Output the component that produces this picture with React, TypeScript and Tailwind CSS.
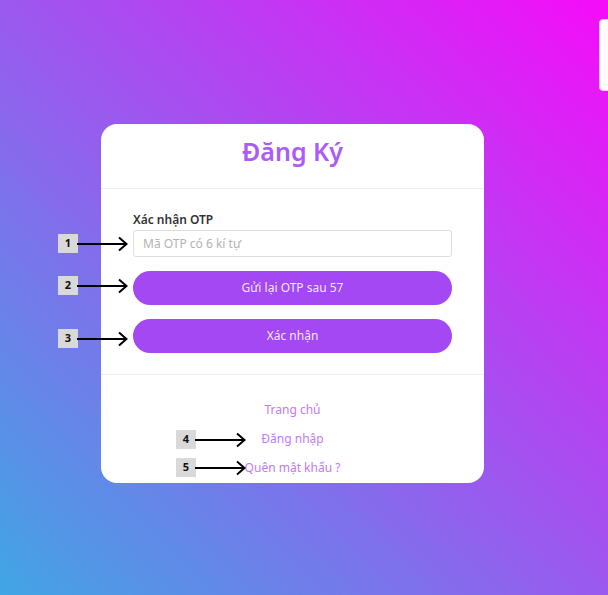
import React from "react";

// numbered markers with an arrow pointing into the form
function Marker({ n, className, arrowW }: { n: string; className: string; arrowW: number }) {
  return (
    <div className={`absolute flex items-center ${className}`}>
      <span className="w-[20px] h-[19px] bg-[#d9d9d9] flex items-center justify-center text-[11px] font-bold text-[#111]">
        {n}
      </span>
      <svg width={arrowW} height="16" viewBox={`0 0 ${arrowW} 16`} className="-ml-px">
        <line x1="0" y1="8" x2={arrowW - 1} y2="8" stroke="#000" strokeWidth="2" />
        <polyline
          points={`${arrowW - 9},1.5 ${arrowW - 1.5},8 ${arrowW - 9},14.5`}
          fill="none"
          stroke="#000"
          strokeWidth="2"
          strokeLinejoin="miter"
        />
      </svg>
    </div>
  );
}

export default function App() {
  return (
    <div
      className="relative w-full min-h-[595px] overflow-hidden bg-[linear-gradient(to_top_right,#40a6e4,#f50cf9)] pt-[124px] pl-[101px]"
      style={{ fontFamily: '"Noto Sans", "Open Sans", sans-serif' }}
    >
      {/* white panel peeking in at the right edge */}
      <div className="absolute left-[599px] top-[19px] w-[40px] h-[72px] bg-white border border-[#f3c4f8] rounded-sm" />

      <div className="w-[383px] bg-white rounded-2xl">
        {/* header */}
        <div className="h-[65px] pb-[10px] flex items-center justify-center border-b border-[#efefef]">
          <h1 className="text-[25px] font-semibold text-[#ab5cf6] leading-none">Đăng Ký</h1>
        </div>

        {/* body */}
        <div className="px-[32px] pt-[23px] pb-[21px]">
          <label className="block text-[12px] font-semibold text-[#333] leading-[16px] mb-[2px]">Xác nhận OTP</label>
          <input
            type="text"
            placeholder="Mã OTP có 6 kí tự"
            className="w-full h-[27px] border border-[#dedede] rounded-[3px] px-[9px] text-[12px] placeholder:text-[#b3b3b3] outline-none"
          />
          <button className="mt-[14px] w-full h-[34px] rounded-full bg-[#a348f2] text-[12px] text-[#f3e6ff]">
            Gửi lại OTP sau 57
          </button>
          <button className="mt-[14px] w-full h-[34px] rounded-full bg-[#a348f2] text-[12px] text-[#f3e6ff]">
            Xác nhận
          </button>
        </div>

        {/* footer links */}
        <div className="border-t border-[#efefef] pt-[27px] pb-[7px] flex flex-col items-center gap-[13px] text-[12px] leading-[16px] text-[#c07af8]">
          <a>Trang chủ</a>
          <a>Đăng nhập</a>
          <a>Quên mật khẩu ?</a>
        </div>
      </div>

      <Marker n="1" className="left-[58px] top-[234px]" arrowW={51} />
      <Marker n="2" className="left-[58px] top-[276px]" arrowW={51} />
      <Marker n="3" className="left-[58px] top-[329px]" arrowW={51} />
      <Marker n="4" className="left-[176px] top-[430px]" arrowW={51} />
      <Marker n="5" className="left-[176px] top-[458px]" arrowW={51} />
    </div>
  );
}
